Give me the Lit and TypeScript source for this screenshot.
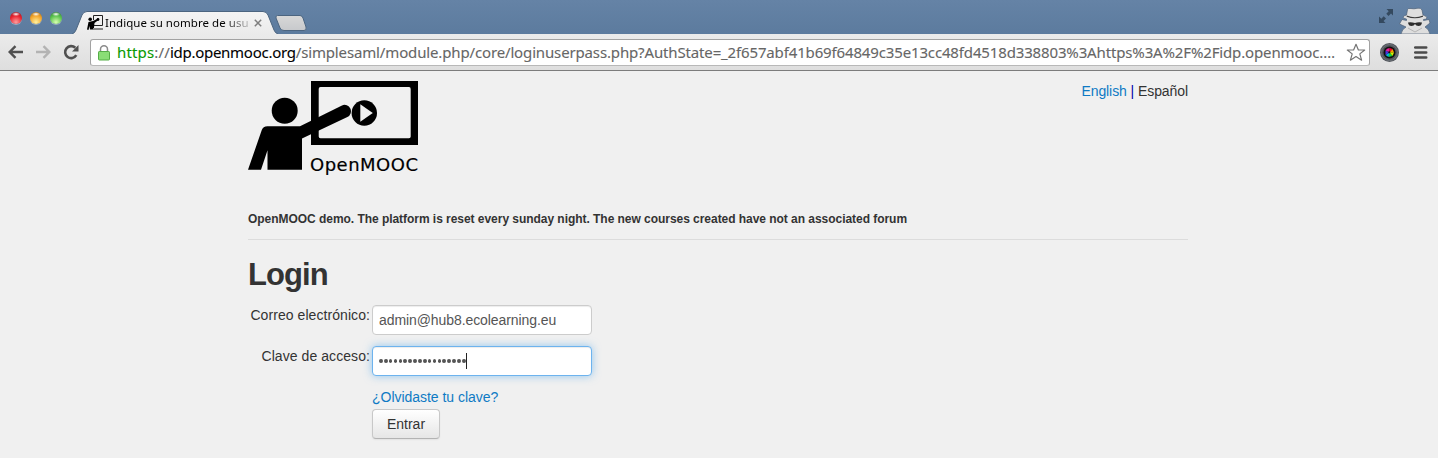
import { LitElement, html, css, svg } from "lit";
import { customElement } from "lit/decorators.js";

const teacher = svg`
  <path fill-rule="evenodd" d="M63 0H170V64H63ZM72.5 6Q70.7 6 70.7 8V55.5Q70.7 57.3 72.5 57.3H161Q162.7 57.3 162.7 55.5V8Q162.7 6 161 6Z"/>
  <circle cx="36.7" cy="29.8" r="13"/>
  <path d="M0 88.8L13.7 49.3Q15 45.3 19.5 45.3H52L94 24.4A6.4 6.4 0 0 1 99.4 36L54 57.4V88.8H19.5V69.3L13 88.8Z"/>
  <circle cx="116.3" cy="32" r="12.7"/>
  <path fill="#f0f0f0" d="M112.3 23.3L124.8 32L112.3 40.7Z"/>`;

@customElement("browser-chrome")
class BrowserChrome extends LitElement {
  static styles = css`
    :host { display: block; height: 71px; font-family: "Noto Sans", "Open Sans", sans-serif; }
    svg { display: block; flex: none; }
    .titlebar { height: 34px; display: flex; background: linear-gradient(#6583a6, #5c7b9e); box-sizing: border-box; }
    .lights { display: flex; gap: 8px; padding: 12px 0 0 10px; width: 62px; box-sizing: border-box; }
    .light { width: 12px; height: 12px; flex: none; border-radius: 50%; box-sizing: border-box; box-shadow: 0 1px 0 rgba(255,255,255,.35); }
    .red { background: radial-gradient(ellipse 4px 2px at 50% 18%, #fff, transparent), radial-gradient(circle at 50% 85%, #ff9d9d, #e8242f 55%, #8c1a22); }
    .amber { background: radial-gradient(ellipse 4px 2px at 50% 18%, #fff, transparent), radial-gradient(circle at 50% 85%, #fff3a0, #f3a52b 55%, #9b6417); }
    .green { background: radial-gradient(ellipse 4px 2px at 50% 18%, #fff, transparent), radial-gradient(circle at 50% 85%, #d9ffb0, #5cc44f 55%, #2c7430); }
    .tabs { display: grid; width: 250px; margin-left: 10px; }
    .tabs > * { grid-area: 1 / 1; }
    .tab { display: flex; align-items: flex-start; padding: 15px 0 0 15px; }
    .title { font: 11.5px/16px "Noto Sans", sans-serif; letter-spacing: .05px; width: 144px; white-space: nowrap; margin-left: 2px; color: #000;
      -webkit-mask-image: linear-gradient(90deg, #000 118px, transparent 150px); mask-image: linear-gradient(90deg, #000 118px, transparent 150px); }
    .close { margin: 4px 0 0 5px; }
    .right { margin-left: auto; display: flex; padding-right: 6px; }
    .expand { margin: 9px 4px 0 0; }
    .spy { margin-top: 6px; }
    .toolbar { height: 37px; box-sizing: border-box; border-bottom: 1px solid #7c7c7c; background: linear-gradient(#ebebeb, #dedede); display: flex; padding: 5px 0 0 8px; }
    .back { margin-top: 6px; }
    .fwd { margin: 6px 0 0 13px; }
    .reload { margin: 5px 0 0 12px; }
    .omni { width: 1280px; height: 27px; box-sizing: border-box; border: 1px solid #a2a2a2; border-bottom-color: #b8b8b8; border-radius: 3px; background: #fff; margin-left: 10px; display: flex; }
    .lock { margin: 5px 0 0 7px; }
    .url { font-size: 15px; line-height: 25px; margin-left: 7px; width: 1227px; white-space: nowrap; color: #666; -webkit-text-stroke: .1px; }
    .scheme { color: #0a9a00; }
    .scheme, .sep { letter-spacing: .15px; }
    .domain { color: #000; letter-spacing: -.27px; }
    .path { letter-spacing: -.145px; }
    .star { margin: 3px 0 0 2px; }
    .lens { margin: 4px 0 0 10px; }
    .menu { margin: 7px 0 0 14px; }
  `;

  render() {
    return html`
      <div class="titlebar">
        <div class="lights">
          <span class="light red"></span><span class="light amber"></span><span class="light green"></span>
        </div>
        <div class="tabs">
          <svg width="250" height="34" viewBox="0 0 250 34">
            <defs>
              <linearGradient id="t" x2="0" y2="1"><stop stop-color="#f4f4f4"/><stop offset="1" stop-color="#ebebeb"/></linearGradient>
              <linearGradient id="n" x2="0" y2="1"><stop stop-color="#d8d8d8"/><stop offset="1" stop-color="#c7c9cc"/></linearGradient>
            </defs>
            <path d="M0 34Q3 33 4 30L10 15Q11.500 11.500 15 11.500H191Q194.500 11.500 196 15L202 30Q203 33 206 34" fill="url(#t)" stroke="#4c6580"/>
            <path d="M205.500 15.500H228Q230 15.500 231 18L234 27Q235 30.500 232 30.500H212Q209 30.500 208 28L204 18Q203.500 15.500 205.500 15.500Z" fill="url(#n)" stroke="#4c6580"/>
          </svg>
          <div class="tab">
            <svg width="16" height="16" viewBox="0 0 16 16">
              <path d="M6.500 5V.5H15.500V10.500H7" fill="none" stroke="#222"/>
              <path d="M0 14.500L1.500 7L6 6L11 3.500L11.500 5L7.500 8L6.800 14.500H3L2.500 11L1.500 15Z"/>
              <circle cx="3.200" cy="4.200" r="1.800"/><circle cx="11" cy="4.500" r="1.400"/>
              <path fill="#888" d="M6 13H16V15H6Z"/>
            </svg>
            <div class="title">Indique su nombre de usua</div>
            <svg class="close" width="8" height="8" viewBox="0 0 8 8"><path d="M.8.8L7.200 7.200M7.200.8L.8 7.200" stroke="#7e7e7e" stroke-width="1.500"/></svg>
          </div>
        </div>
        <div class="right">
          <svg class="expand" width="15" height="15" viewBox="0 0 15 15">
            <path d="M7.500 0H14V6.500L12 4.500L9.500 7L7.300 4.700L9.700 2.300ZM0 7.500L2.300 9.700L4.700 7.300L7 9.500L4.500 12L6.500 14H0Z" fill="#34495f"/>
          </svg>
          <svg class="spy" width="34" height="28" viewBox="0 0 34 28">
            <path d="M3 28Q4 23 8 21L1.500 18L4 13.500L8.500 14.500V13Q5 12.500 5 11Q6 9.500 8.500 9L9.500 3.500Q10 2 13 2.500Q16 3.200 19 2.300Q23 1.500 24 4L25 9Q29 10 29 12Q28 13.500 25.500 13.500V14.500L31 13.500L32 17L27 21Q31 23 32 28Z" fill="#dedede" stroke="#4d6077" stroke-width=".7"/>
            <path d="M8.700 9.500Q17 12.800 25 9.500V10.700Q17 14 8.700 10.700Z" fill="#3b3b3b"/>
            <path d="M10 16.500Q13 15.800 17 17Q20 15.800 24 16.500Q23.500 20 20.500 20Q18 20 17 18Q16 20 13.500 20Q10.500 20 10 16.500Z" fill="#2c2c2c"/>
            <path d="M10 22L17 26L24 22" fill="none" stroke="#b5b5b5"/>
          </svg>
        </div>
      </div>
      <div class="toolbar">
        <svg class="back" width="15" height="14" viewBox="0 0 15 14"><path d="M15 7H2M7.500 1.200L1.700 7L7.500 12.800" fill="none" stroke="#505050" stroke-width="2.400"/></svg>
        <svg class="fwd" width="15" height="14" viewBox="0 0 15 14"><path d="M0 7H13M7.500 1.200L13.300 7L7.500 12.800" fill="none" stroke="#b3b3b3" stroke-width="2.400"/></svg>
        <svg class="reload" width="17" height="16" viewBox="0 0 17 16"><path d="M13.300 11.200A6 6 0 1 1 12.300 3.800" fill="none" stroke="#505050" stroke-width="2.600"/><path d="M15.500 1V7.500H9Z" fill="#505050"/></svg>
        <div class="omni">
          <svg class="lock" width="12" height="16" viewBox="0 0 12 16">
            <path d="M2.500 8V4.300a3.500 3.500 0 0 1 7 0V8" fill="none" stroke="#8b8b8b" stroke-width="1.500"/>
            <rect x=".5" y="6.500" width="11" height="8.500" rx=".7" fill="#8add76" stroke="#55ad47"/>
          </svg>
          <div class="url"><span class="scheme">https</span><span class="sep">://</span><span class="domain">idp.openmooc.org</span><span class="path">/simplesaml/module.php/core/loginuserpass.php?AuthState=_2f657abf41b69f64849c35e13cc48fd4518d338803%3Ahttps%3A%2F%2Fidp.openmooc.…</span></div>
          <svg class="star" width="20" height="19" viewBox="0 0 20 19"><path d="M10 1.300L12.400 7H18.700L13.800 10.900L15.600 17.200L10 13.600L4.400 17.200L6.200 10.900L1.300 7H7.600Z" fill="#fff" stroke="#747474" stroke-width="1.200" stroke-linejoin="round"/></svg>
        </div>
        <svg class="lens" width="20" height="20" viewBox="0 0 20 20">
          <circle cx="9.500" cy="9.500" r="9.500" fill="#52565c"/><circle cx="9.500" cy="9.500" r="8" fill="none" stroke="#6d7278"/><circle cx="9.500" cy="9.500" r="6" fill="#111"/>
          <g transform="translate(-.5 -.5)">
          <path d="M10 10L6 8A4.500 4.500 0 0 1 10 5.500Z" fill="#e7199b"/><path d="M10 10V5.500L13 6.500Z" fill="#f03"/><path d="M10 10L13 6.500L14.500 10Z" fill="#ff9b00"/>
          <path d="M10 10H14.500L13 13.500Z" fill="#d6f000"/><path d="M10 10L13 13.500L9 14.500Z" fill="#16d33b"/><path d="M10 10L9 14.500L6 12.500Z" fill="#00bcd8"/><path d="M10 10L6 12.500V8Z" fill="#4737e0"/>
          <circle cx="9.700" cy="9.700" r="1" fill="#111"/></g>
        </svg>
        <svg class="menu" width="14" height="13" viewBox="0 0 14 13"><path d="M1.200 1.500H12.200M1.200 6.500H12.200M1.200 11.500H12.200" stroke="#4b4b4b" stroke-width="2.600" stroke-linecap="round"/></svg>
      </div>`;
  }
}

@customElement("login-page")
class LoginPage extends LitElement {
  static styles = css`
    :host { display: block; width: 940px; margin-left: 248px; padding-top: 10px; font: 14px/20px "Liberation Sans", Arial, sans-serif; color: #333; }
    .head { display: flex; justify-content: space-between; height: 98px; }
    .langs { letter-spacing: -.08px; }
    .langs .bar { color: #00a; }
    a { color: #0e7ac4; text-decoration: none; }
    .notice { margin: 30px 0 0; font-size: 12px; font-weight: bold; line-height: 20px; height: 30px; border-bottom: 1px solid #dcdcdc; white-space: nowrap; letter-spacing: -.041px; }
    h1 { font-size: 31px; line-height: 40px; margin: 15px 0 10px; letter-spacing: -.9px; }
    .form { display: grid; grid-template-columns: 122px 220px; column-gap: 2px; }
    label { text-align: right; letter-spacing: .07px; white-space: nowrap; }
    .field { box-sizing: border-box; width: 220px; height: 30px; margin-bottom: 11px; border: 1px solid #ccc; border-radius: 4px; background: #fff; padding: 4px 6px; color: #555; display: flex; align-items: center; box-shadow: inset 0 1px 1px rgba(0,0,0,.075); letter-spacing: -.08px; }
    .focus { border-color: #6db3ee; box-shadow: inset 0 1px 1px rgba(0,0,0,.075), 0 0 8px rgba(82,168,236,.6); }
    .dots { display: flex; gap: 1.200px; }
    .dot { width: 3.700px; height: 4px; border-radius: 50%; background: #555; }
    .caret { width: 1px; height: 16px; background: #222; margin-left: .5px; }
    .actions { grid-column: 2; display: flex; flex-direction: column; align-items: flex-start; }
    .forgot { margin-bottom: 2px; letter-spacing: -.03px; }
    button { font: 14px/20px "Liberation Sans", Arial, sans-serif; color: #333; width: 68px; height: 30px; padding: 0; border: 1px solid #c8c8c8; border-bottom-color: #b3b3b3; border-radius: 4px; background: linear-gradient(#fff, #e6e6e6); box-shadow: 0 1px 2px rgba(0,0,0,.06); }
  `;

  render() {
    return html`
      <div class="head">
        <svg width="172" height="98" viewBox="0 0 172 98">
          ${teacher}
          <text x="62" y="89.500" font-family="DejaVu Sans" font-size="18" textLength="108" stroke="#000" stroke-width=".2">OpenMOOC</text>
        </svg>
        <div class="langs"><a>English</a> <span class="bar">|</span> Español</div>
      </div>
      <p class="notice">OpenMOOC demo. The platform is reset every sunday night. The new courses created have not an associated forum</p>
      <h1>Login</h1>
      <div class="form">
        <label>Correo electrónico:</label>
        <div class="field">admin@hub8.ecolearning.eu</div>
        <label>Clave de acceso:</label>
        <div class="field focus"><span class="dots">${Array.from({ length: 18 }, () => html`<i class="dot"></i>`)}</span><span class="caret"></span></div>
        <div class="actions"><a class="forgot">¿Olvidaste tu clave?</a><button>Entrar</button></div>
      </div>`;
  }
}

@customElement("app-root")
class AppRoot extends LitElement {
  static styles = css`
    :host { display: block; width: 1438px; height: 458px; overflow: hidden; background: #f0f0f0; }
  `;
  render() {
    return html`<browser-chrome></browser-chrome><login-page></login-page>`;
  }
}
